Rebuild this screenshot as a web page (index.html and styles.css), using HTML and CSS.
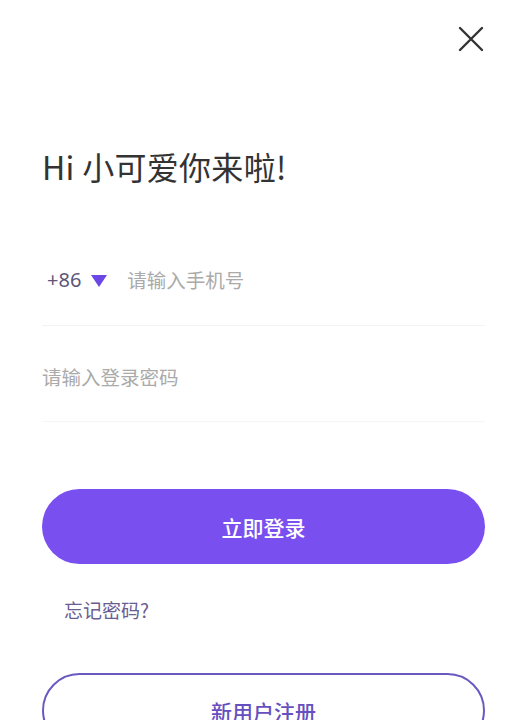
FILE: index.html
```html
<!DOCTYPE html>
<html lang="zh">
<head>
<meta charset="utf-8">
<link rel="stylesheet" href="styles.css">
</head>
<body>
<div class="page">
  <div class="topbar">
    <svg class="close" width="26" height="26" viewBox="0 0 26 26"><path d="M2 2 L24 24 M24 2 L2 24" stroke="#333" stroke-width="2.4" stroke-linecap="round" fill="none"/></svg>
  </div>
  <h1 class="title">Hi 小可爱你来啦!</h1>
  <div class="field phone">
    <span class="code">+86</span>
    <svg class="tri" width="16" height="12" viewBox="0 0 16 12"><path d="M0 0 H16 L8 12 Z" fill="#6b47e6"/></svg>
    <span class="ph">请输入手机号</span>
  </div>
  <div class="field pwd">
    <span class="ph">请输入登录密码</span>
  </div>
  <button class="btn primary">立即登录</button>
  <div class="forgot">忘记密码?</div>
  <button class="btn outline">新用户注册</button>
</div>
</body>
</html>
```
FILE: styles.css
```css
html, body { margin: 0; padding: 0; background: #fff; }
body { font-family: "Noto Sans CJK SC", "Noto Sans", sans-serif; width: 527px; height: 720px; overflow: hidden; }
.page { padding: 0 42px; }
.topbar { display: flex; justify-content: flex-end; padding-top: 26px; margin-right: 1px; height: 26px; }
.title { margin: 94px 0 0 0; font-weight: 400; font-size: 32px; line-height: 40px; color: #333; letter-spacing: 0.3px; }
.field { display: flex; align-items: center; border-bottom: 1px solid #f3f3f3; }
.phone { margin-top: 76px; height: 64px; padding-left: 5px; align-items: flex-start; padding-top: 4px; box-sizing: border-box; }
.code { font-family: "Noto Sans", sans-serif; font-size: 20px; color: #5d5679; line-height: 28px; }
.tri { margin: 9px 0 0 10px; }
.ph { font-size: 19.5px; color: #aaa; line-height: 28px; }
.phone .ph { margin-left: 20px; }
.pwd { height: 96px; align-items: flex-start; padding-top: 37px; box-sizing: border-box; border-bottom-color: #f6f6f6; }
.btn { display: block; width: 443px; height: 75px; border-radius: 38px; font-family: "Noto Sans CJK SC", sans-serif; font-size: 21px; font-weight: 500; box-sizing: border-box; }
.primary { margin-top: 67px; background: #7a4ff0; color: #fff; border: none; }
.forgot { margin: 32px 0 0 22px; font-size: 19px; color: #6a5d92; line-height: 28px; }
.outline { margin-top: 49px; background: #fff; border: 2px solid #6b58c0; color: #6650c0; }
```
